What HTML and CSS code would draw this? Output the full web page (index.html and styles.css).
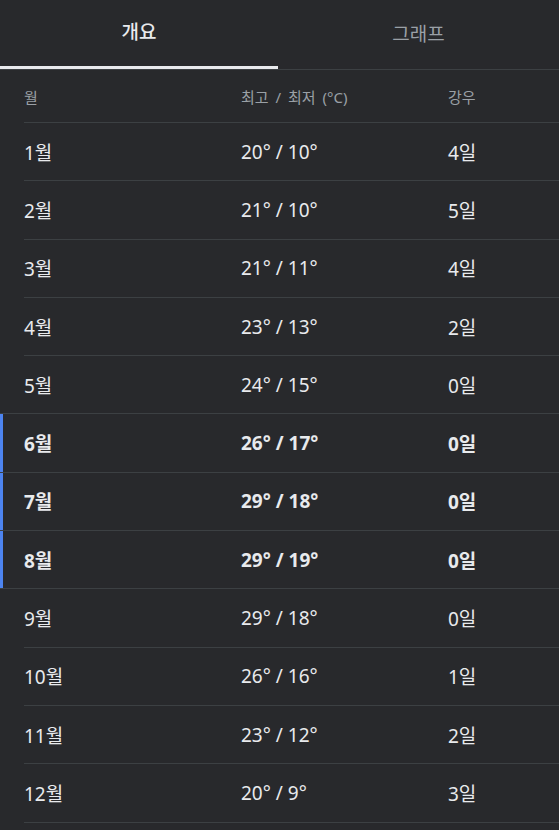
FILE: index.html
```html
<!DOCTYPE html>
<html lang="ko">
<head>
<meta charset="utf-8">
<link rel="stylesheet" href="styles.css">
</head>
<body>
<div class="tabs">
  <div class="tab active">개요</div>
  <div class="tab">그래프</div>
</div>
<div class="table">
  <div class="row head"><span>월</span><span>최고 / 최저 (°C)</span><span>강우</span></div>
  <div class="row"><span>1월</span><span>20° / 10°</span><span>4일</span></div>
  <div class="row"><span>2월</span><span>21° / 10°</span><span>5일</span></div>
  <div class="row"><span>3월</span><span>21° / 11°</span><span>4일</span></div>
  <div class="row"><span>4월</span><span>23° / 13°</span><span>2일</span></div>
  <div class="row pre"><span>5월</span><span>24° / 15°</span><span>0일</span></div>
  <div class="row hl"><span>6월</span><span>26° / 17°</span><span>0일</span></div>
  <div class="row hl"><span>7월</span><span>29° / 18°</span><span>0일</span></div>
  <div class="row hl"><span>8월</span><span>29° / 19°</span><span>0일</span></div>
  <div class="row"><span>9월</span><span>29° / 18°</span><span>0일</span></div>
  <div class="row"><span>10월</span><span>26° / 16°</span><span>1일</span></div>
  <div class="row"><span>11월</span><span>23° / 12°</span><span>2일</span></div>
  <div class="row"><span>12월</span><span>20° / 9°</span><span>3일</span></div>
</div>
</body>
</html>
```
FILE: styles.css
```css
html, body {
  margin: 0;
  padding: 0;
  background: #28292c;
}
body {
  font-family: "Noto Sans", "Noto Sans CJK KR", sans-serif;
  color: #e8eaed;
  width: 559px;
  height: 830px;
  overflow: hidden;
}
.tabs {
  display: grid;
  grid-template-columns: 278px 1fr;
  height: 70px;
  border-bottom: 1px solid #3c4043;
  box-sizing: border-box;
}
.tab {
  display: flex;
  align-items: center;
  justify-content: center;
  font-size: 19px;
  color: #9aa0a6;
  padding-bottom: 4px;
  box-sizing: border-box;
}
.tab.active {
  color: #e8eaed;
  font-weight: 500;
  border-bottom: 3px solid #e8eaed;
}
.table { display: flex; flex-direction: column; }
.row {
  display: grid;
  grid-template-columns: 217px 207px 1fr;
  align-items: center;
  height: 58.3px;
  margin-left: 24px;
  border-bottom: 1px solid #3c4043;
  box-sizing: border-box;
  font-size: 19px;
}
.row.head {
  height: 53px;
  font-size: 15px;
  word-spacing: 3px;
  color: #9aa0a6;
}
.row.hl {
  margin-left: 0;
  padding-left: 24px;
  font-weight: 700;
  box-shadow: inset 3px 0 0 #4d84f0;
}
.row.pre { margin-left: 0; padding-left: 24px; }
```
